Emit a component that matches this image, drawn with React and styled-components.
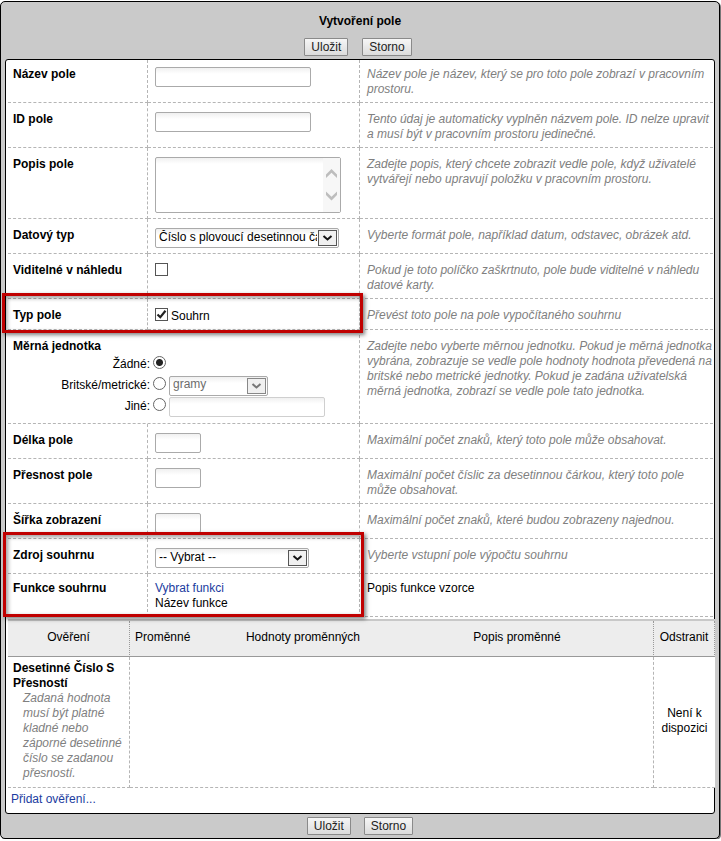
import React from "react";
import styled, { createGlobalStyle, css } from "styled-components";

const Global = createGlobalStyle`
  * { box-sizing: border-box; }
  html { background: #fff; }
  body { margin: 0; color: #000; }
  body, button, input, select, textarea {
    font-family: "Liberation Sans", Arial, sans-serif;
    font-size: 12px;
    line-height: 15px;
  }
`;

const line = "1px dashed #b5b5b5";

const Frame = styled.form`
  margin: 1px 1px 0 0;
  border: 1px solid #000;
  border-radius: 5px;
  background: #cacaca;
  box-shadow: 1px 1px 0 #777;
`;

const Header = styled.header`
  padding: 11px 0 3px;
  text-align: center;
`;

const Title = styled.h1`
  margin: 0 0 9px;
  font-size: 12px;
  line-height: 16px;
`;

const Actions = styled.div`
  display: flex;
  justify-content: center;
  gap: ${(p) => (p.$bottom ? 13 : 14)}px;
  padding-right: ${(p) => (p.$bottom ? 0 : 4)}px;
`;

const Footer = styled.footer`
  padding: 3px 0;
`;

const Button = styled.button`
  height: 18px;
  padding: 0 6px;
  border: 1px solid #8a8a8a;
  border-radius: 1px;
  background: linear-gradient(#f6f6f6, #dcdcdc);
  color: #222;
  line-height: 16px;
`;

const Panel = styled.main`
  margin: 0 4px;
  padding-left: 2px;
  border: 1px solid #000;
  border-radius: 3px;
  background: #fff;
`;

const Group = styled.div`
  position: relative;
`;

const Highlight = styled.div`
  position: absolute;
  top: ${(p) => (p.$flush ? -7 : -6)}px;
  bottom: ${(p) => (p.$flush ? 0 : -3)}px;
  left: ${(p) => (p.$flush ? -5 : -6)}px;
  width: 361px;
  border: 3px solid #c00000;
  box-shadow: 2px 2px 4px rgba(0, 0, 0, 0.5), inset 2px 2px 4px rgba(0, 0, 0, 0.4);
  pointer-events: none;
`;

const Row = styled.div`
  display: grid;
  grid-template-columns: 140px 212px 1fr;
  min-height: ${(p) => p.$h || 35}px;
  margin-right: 1px;
`;

const cell = css`
  padding: ${(p) => (p.$top === undefined ? 9 : p.$top)}px 0 5px 7px;
  border-bottom: ${line};
`;

const Name = styled.div`
  ${cell}
  padding-left: 5px;
  border-right: ${line};
  font-weight: bold;
`;

const Control = styled.div`
  ${cell}
  border-right: ${line};
`;

const Help = styled.div`
  ${cell}
  color: ${(p) => (p.$plain ? "#000" : "#808080")};
  font-style: ${(p) => (p.$plain ? "normal" : "italic")};
`;

const Input = styled.input`
  display: block;
  width: ${(p) => p.$w || 156}px;
  height: 20px;
  padding: 0 3px;
  border: 1px solid ${(p) => (p.$faint ? "#cfcfcf" : "#aaa")};
  border-radius: 2px;
  background: linear-gradient(#f0f0f0, #fff 6px);
`;

const AreaBox = styled.div`
  position: relative;
  width: 186px;
`;

const Area = styled.textarea`
  display: block;
  width: 100%;
  height: 56px;
  border: 1px solid #aaa;
  border-radius: 2px;
  background: linear-gradient(#f0f0f0, #fff 6px);
  resize: none;
  overflow: hidden;
`;

const Scroller = styled.svg`
  position: absolute;
  top: 1px;
  right: 1px;
  width: 17px;
  height: 54px;
  background: #f7f7f7;
  fill: #bdbdbd;
`;

const SelectBox = styled.div`
  position: relative;
  width: ${(p) => p.$w}px;
`;

const Select = styled.select`
  display: block;
  appearance: none;
  width: 100%;
  height: 20px;
  padding: 0 21px 2px 3px;
  border: 1px solid #aaa;
  border-radius: 2px;
  background: linear-gradient(#f0f0f0, #fff 6px);
  color: ${(p) => (p.$muted ? "#6d6d6d" : "#000")};
`;

const Arrow = styled.svg`
  position: absolute;
  top: 2px;
  right: 2px;
  width: 19px;
  height: 16px;
  pointer-events: none;
`;

const Check = styled.input`
  appearance: none;
  display: block;
  flex: none;
  width: 13px;
  height: 13px;
  margin: 0;
  border: 1px solid #555;
  background: #fff;
  &:checked {
    background: #fff url("data:image/svg+xml,%3Csvg xmlns='http://www.w3.org/2000/svg' viewBox='0 0 11 11'%3E%3Cpath d='M1.5 5.5L4.3 8.2L9.5 1.8' fill='none' stroke='%23222' stroke-width='2.2'/%3E%3C/svg%3E");
  }
`;

const CheckLabel = styled.label`
  display: flex;
  align-items: flex-start;
  gap: 3px;
  height: 16px;
  span { padding-top: 1px; }
`;

const Units = styled.fieldset`
  grid-column: span 2;
  min-width: 0;
  margin: 0;
  padding: 9px 0 6px 5px;
  border: 0;
  border-bottom: ${line};
  border-right: ${line};
`;

const UnitsTitle = styled.div`
  font-weight: bold;
`;

const Unit = styled.div`
  display: grid;
  grid-template-columns: 137px 13px 1fr;
  align-items: center;
  height: 21px;
  column-gap: 3px;
  & > label { text-align: right; }
`;

const Radio = styled.input`
  appearance: none;
  width: 13px;
  height: 13px;
  margin: 0 0 4px;
  border: 1px solid #666;
  border-radius: 50%;
  background: #fff;
  &:checked { background: radial-gradient(circle, #222 3px, #fff 4px); }
`;

const Link = styled.a`
  color: #1c3ca0;
  text-decoration: none;
`;

const Table = styled.table`
  width: calc(100% + 1px);
  margin-top: 2px;
  border-collapse: separate;
  border-spacing: 0;
  border-top: 2px solid #c8c8c8;
  background: #fff;
  table-layout: fixed;
`;

const Th = styled.th`
  width: ${(p) => (p.$w ? p.$w + "px" : "auto")};
  height: 36px;
  padding: 0 5px 2px;
  border-bottom: 1px solid #999;
  border-right: ${(p) => (p.$edge ? "1px dotted #999" : "0")};
  background: #ededed;
  font-weight: normal;
  text-align: ${(p) => p.$align || "center"};
`;

const Td = styled.td`
  padding: 4px 5px 6px;
  border-bottom: ${line};
  border-right: ${(p) => (p.$edge ? line : "0")};
  text-align: ${(p) => p.$align || "left"};
`;

const Note = styled.p`
  margin: 0 0 0 10px;
  color: #808080;
  font-style: italic;
`;

const AddLine = styled.div`
  padding: 4px 3px 6px;
`;

function Dropdown({ id, w, muted, label, option }) {
  return (
    <SelectBox $w={w}>
      <Select id={id} $muted={muted} aria-label={label}>
        <option>{option}</option>
      </Select>
      <Arrow viewBox="0 0 19 16">
        <rect x="0.5" y="0.5" width="18" height="15" fill="#f0f0f0" stroke={muted ? "#888" : "#555"} />
        <path d="M5.5 6L9.5 9.5L13.5 6" fill="none" stroke={muted ? "#777" : "#111"} strokeWidth="2" />
      </Arrow>
    </SelectBox>
  );
}

function Field({ id, name, help, h, top, plain, children }) {
  return (
    <Row $h={h}>
      <Name $top={top}>{id ? <label htmlFor={id}>{name}</label> : name}</Name>
      <Control $top={top}>{children}</Control>
      <Help $top={top} $plain={plain}>{help}</Help>
    </Row>
  );
}

function Buttons({ bottom }) {
  return (
    <Actions $bottom={bottom}>
      <Button type="button">Uložit</Button>
      <Button type="button">Storno</Button>
    </Actions>
  );
}

export default function App() {
  return (
    <>
      <Global />
      <Frame>
        <Header>
          <Title>Vytvoření pole</Title>
          <Buttons />
        </Header>
        <Panel>
          <Field id="name" name="Název pole" h={43} top={7}
            help="Název pole je název, který se pro toto pole zobrazí v pracovním prostoru.">
            <Input id="name" type="text" />
          </Field>
          <Field id="fid" name="ID pole" h={45}
            help="Tento údaj je automaticky vyplněn názvem pole. ID nelze upravit a musí být v pracovním prostoru jedinečné.">
            <Input id="fid" type="text" />
          </Field>
          <Field id="desc" name="Popis pole" h={71}
            help="Zadejte popis, který chcete zobrazit vedle pole, když uživatelé vytvářejí nebo upravují položku v pracovním prostoru.">
            <AreaBox>
              <Area id="desc" />
              <Scroller viewBox="0 0 17 54">
                <path d="M3 16.5L8.5 11L14 16.5V20L8.5 14.8L3 20ZM3 33.5L8.5 38.7L14 33.5V37L8.5 42.5L3 37Z" />
              </Scroller>
            </AreaBox>
          </Field>
          <Field id="type" name="Datový typ"
            help="Vyberte formát pole, například datum, odstavec, obrázek atd.">
            <Dropdown id="type" w={184} option="Číslo s plovoucí desetinnou čárkou" />
          </Field>
          <Field id="preview" name="Viditelné v náhledu" h={45}
            help="Pokud je toto políčko zaškrtnuto, pole bude viditelné v náhledu datové karty.">
            <Check id="preview" type="checkbox" />
          </Field>
          <Group>
            <Field name="Typ pole" h={31} help="Převést toto pole na pole vypočítaného souhrnu">
              <CheckLabel>
                <Check type="checkbox" defaultChecked />
                <span>Souhrn</span>
              </CheckLabel>
            </Field>
            <Highlight />
          </Group>
          <Row $h={94}>
            <Units aria-labelledby="units">
              <UnitsTitle id="units">Měrná jednotka</UnitsTitle>
              <Unit>
                <label htmlFor="u-none">Žádné:</label>
                <Radio id="u-none" type="radio" name="unit" defaultChecked />
              </Unit>
              <Unit>
                <label htmlFor="u-brit">Britské/metrické:</label>
                <Radio id="u-brit" type="radio" name="unit" />
                <Dropdown w={99} muted label="Jednotka" option="gramy" />
              </Unit>
              <Unit>
                <label htmlFor="u-other">Jiné:</label>
                <Radio id="u-other" type="radio" name="unit" />
                <Input type="text" aria-label="Jiná jednotka" $faint />
              </Unit>
            </Units>
            <Help>
              Zadejte nebo vyberte měrnou jednotku. Pokud je měrná jednotka vybrána, zobrazuje se vedle pole
              hodnoty hodnota převedená na britské nebo metrické jednotky. Pokud je zadána uživatelská měrná
              jednotka, zobrazí se vedle pole tato jednotka.
            </Help>
          </Row>
          <Field id="len" name="Délka pole" help="Maximální počet znaků, který toto pole může obsahovat.">
            <Input id="len" type="text" $w={46} />
          </Field>
          <Field id="prec" name="Přesnost pole" h={45}
            help="Maximální počet číslic za desetinnou čárkou, který toto pole může obsahovat.">
            <Input id="prec" type="text" $w={46} />
          </Field>
          <Field id="width" name="Šířka zobrazení"
            help="Maximální počet znaků, které budou zobrazeny najednou.">
            <Input id="width" type="text" $w={46} />
          </Field>
          <Group>
            <Field id="source" name="Zdroj souhrnu" help="Vyberte vstupní pole výpočtu souhrnu">
              <Dropdown id="source" w={154} option="-- Vybrat --" />
            </Field>
            <Field name="Funkce souhrnu" h={43} top={7} plain help="Popis funkce vzorce">
              <Link href="#funkce">Vybrat funkci</Link>
              <div>Název funkce</div>
            </Field>
            <Highlight $flush />
          </Group>
          <Table>
            <thead>
              <tr>
                <Th $w={122} $edge>Ověření</Th>
                <Th $w={95} $align="left">Proměnné</Th>
                <Th $w={156}>Hodnoty proměnných</Th>
                <Th $edge>Popis proměnné</Th>
                <Th $w={61} $edge>Odstranit</Th>
              </tr>
            </thead>
            <tbody>
              <tr>
                <Td $edge>
                  <strong>Desetinné Číslo S Přesností</strong>
                  <Note>Zadaná hodnota musí být platné kladné nebo záporné desetinné číslo se zadanou přesností.</Note>
                </Td>
                <Td colSpan={3} $edge />
                <Td $align="center">Není k dispozici</Td>
              </tr>
            </tbody>
          </Table>
          <AddLine>
            <Link href="#overeni">Přidat ověření...</Link>
          </AddLine>
        </Panel>
        <Footer>
          <Buttons bottom />
        </Footer>
      </Frame>
    </>
  );
}
